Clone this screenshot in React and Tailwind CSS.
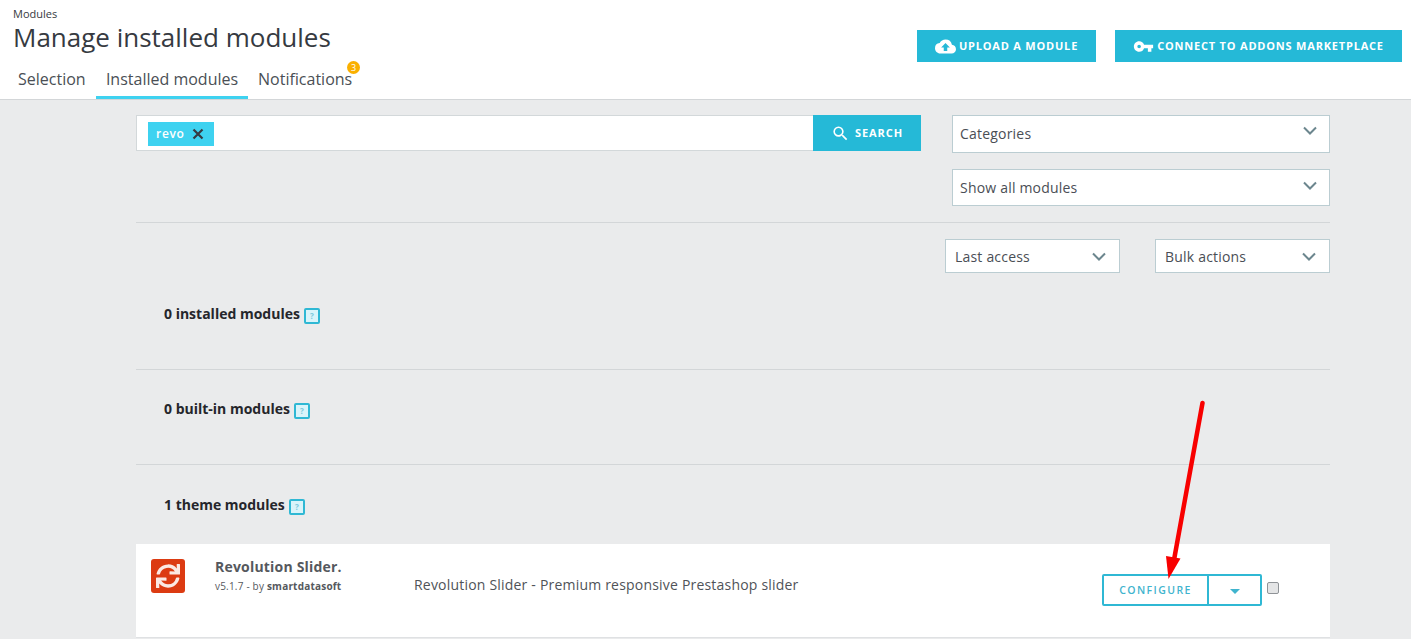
import React from "react";
import { MdCloudUpload, MdVpnKey, MdSearch, MdArrowDropDown } from "react-icons/md";
import { FaSync } from "react-icons/fa";

const TABS = [
  { label: "Selection", cls: "w-[83px] pl-[5px]" },
  { label: "Installed modules", cls: "w-[152px] text-center border-b-[3px] border-[#3ed2f0]" },
  { label: "Notifications", badge: "3", cls: "w-[130px] pl-[10px]" },
];

function Chevron({ className }) {
  return (
    <svg viewBox="0 0 14 9" className={className} fill="none" stroke="#6c868e" strokeWidth="2">
      <path d="M1 1.5 L7 7.5 L13 1.5" />
    </svg>
  );
}

function Select({ label, className, chevronClass }) {
  return (
    <div className={`flex items-center justify-between bg-white border border-[#bbcdd2] text-[14px] tracking-[0.2px] text-[#4a4e55] ${className}`}>
      <span>{label}</span>
      <Chevron className={`w-[14px] h-[9px] mr-[6px] ${chevronClass || ""}`} />
    </div>
  );
}

function Help() {
  return (
    <span className="inline-flex items-center justify-center w-[16px] h-[16px] ml-[4px] mt-[4px] border-2 border-[#2fb8d4] rounded-[2px] bg-[#d9f4fa] text-[8px] font-bold text-[#7cc9da] leading-none">
      ?
    </span>
  );
}

function Section({ title, className }) {
  return (
    <div className={`pl-[28px] flex items-start text-[14px] leading-[20px] font-bold text-[#25262b] ${className}`}>
      <span>{title}</span>
      <Help />
    </div>
  );
}

export default function App() {
  return (
    <div
      className="relative h-[639px] overflow-hidden bg-[#eaebec]"
      style={{ fontFamily: '"Open Sans", "Noto Sans", sans-serif' }}
    >
      {/* header */}
      <header className="h-[100px] bg-white border-b border-[#d3d6d8] flex justify-between">
        <div className="pl-[13px] pt-[7px]">
          <div className="text-[11px] leading-[13px] text-[#363a41]">Modules</div>
          <h1 className="text-[26px] leading-[34px] text-[#363a41]">Manage installed modules</h1>
          <nav className="flex mt-[6px] text-[16px] text-[#4a4f55]">
            {TABS.map((t) => (
              <div key={t.label} className={`relative h-[39px] pt-[7px] ${t.cls}`}>
                {t.label}
                {t.badge && (
                  <span className="absolute left-[99px] top-[1px] w-[13px] h-[13px] text-center rounded-full bg-[#fab000] text-white text-[9px] leading-[13px]">
                    {t.badge}
                  </span>
                )}
              </div>
            ))}
          </nav>
        </div>
        <div className="flex items-start pt-[30px] pr-[9px] gap-[19px]">
          <div className="h-[32px] w-[179px] bg-[#25b9d7] text-white text-[11px] font-bold tracking-[0.8px] flex items-center justify-center gap-[3px]">
            <MdCloudUpload className="w-[21px] h-[21px]" />
            UPLOAD A MODULE
          </div>
          <div className="h-[32px] w-[287px] bg-[#25b9d7] text-white text-[11px] font-bold tracking-[0.8px] flex items-center justify-center gap-[3px]">
            <MdVpnKey className="w-[21px] h-[21px]" />
            CONNECT TO ADDONS MARKETPLACE
          </div>
        </div>
      </header>

      <main className="ml-[136px] w-[1194px] pt-[15px]">
        {/* search + filters */}
        <div className="flex justify-between">
          <div className="w-[785px] h-[36px] flex bg-white border border-[#d3d8da]">
            <div className="flex-1 pl-[11px] pt-[6px]">
              <div className="w-[66px] h-[24px] bg-[#3ed2f0] flex items-center pl-[8px] text-[12px] font-semibold tracking-[0.7px] text-white">
                revo
                <svg viewBox="0 0 12 12" className="w-[12px] h-[12px] ml-[7px]" fill="none" stroke="#363a41" strokeWidth="2.2">
                  <path d="M1.5 1.5 L10.5 10.5 M10.5 1.5 L1.5 10.5" />
                </svg>
              </div>
            </div>
            <div className="w-[108px] -my-px -mr-px bg-[#25b9d7] text-white text-[11px] font-bold tracking-[0.9px] flex items-center justify-center gap-[5px]">
              <MdSearch className="w-[19px] h-[19px]" />
              <span className="pt-[1px]">SEARCH</span>
            </div>
          </div>
          <div className="w-[378px] flex flex-col gap-[16px]">
            <Select label="Categories" chevronClass="-mt-[6px]" className="h-[38px] pl-[7px] pr-[6px] pb-[1px]" />
            <Select label="Show all modules" chevronClass="-mt-[5px]" className="h-[37px] pl-[7px] pr-[6px]" />
          </div>
        </div>

        <div className="mt-[16px] border-t border-[#d3d6d8] pt-[16px] flex justify-end gap-[35px]">
          <Select label="Last access" className="w-[175px] h-[34px] pl-[9px] pr-[7px]" />
          <Select label="Bulk actions" className="w-[175px] h-[34px] pl-[9px] pr-[7px]" />
        </div>

        <Section title="0 installed modules" className="mt-[31px] h-[20px]" />
        <div className="mt-[45px] border-t border-[#d3d6d8]" />
        <Section title="0 built-in modules" className="mt-[29px] h-[20px]" />
        <div className="mt-[45px] border-t border-[#d3d6d8]" />
        <Section title="1 theme modules" className="mt-[30px] h-[20px]" />

        {/* module row */}
        <div className="mt-[29px] h-[94px] bg-white border-b border-[#dfe1e3] flex items-start">
          <div className="ml-[15px] mt-[15px] w-[34px] h-[34px] rounded-[3px] bg-[#dc3b12] flex items-center justify-center">
            <FaSync className="w-[24px] h-[24px] text-[#fbe9e3]" />
          </div>
          <div className="ml-[30px] mt-[13px] w-[199px]">
            <div className="text-[14px] leading-[20px] font-bold tracking-[0.2px] text-[#55585d]">Revolution Slider.</div>
            <div className="text-[10px] leading-[14px] mt-[2px] tracking-[0.2px] text-[#55585d]">
              v5.1.7 - by <span className="font-bold">smartdatasoft</span>
            </div>
          </div>
          <div className="mt-[31px] text-[14px] leading-[20px] text-[#4f5358] tracking-[0.2px]">
            Revolution Slider - Premium responsive Prestashop slider
          </div>
          <div className="ml-auto mt-[30px] flex items-start mr-[51px]">
            <div className="flex h-[32px] w-[160px] border-2 border-[#2fb8d4] rounded-[2px] text-[#3fb4ce]">
              <div className="w-[105px] pt-[1px] border-r-2 border-[#2fb8d4] flex items-center justify-center text-[10.5px] font-semibold tracking-[1.4px]">
                CONFIGURE
              </div>
              <div className="flex-1 flex items-center justify-center">
                <MdArrowDropDown className="w-[24px] h-[24px] mt-[2px]" />
              </div>
            </div>
            <span className="ml-[5px] mt-[8px] w-[12px] h-[12px] rounded-[2px] border border-[#8f9397] bg-[#e4e5e6]" />
          </div>
        </div>
      </main>

      {/* red annotation arrow */}
      <svg className="absolute inset-0 w-[1411px] h-[639px] pointer-events-none" viewBox="0 0 1411 639">
        <path d="M1202.5 403 L1174 560" stroke="#f80000" strokeWidth="4.5" strokeLinecap="round" fill="none" />
        <path d="M1166 556 L1180.5 558.5 L1168.5 579 Z" fill="#f80000" />
      </svg>
    </div>
  );
}
